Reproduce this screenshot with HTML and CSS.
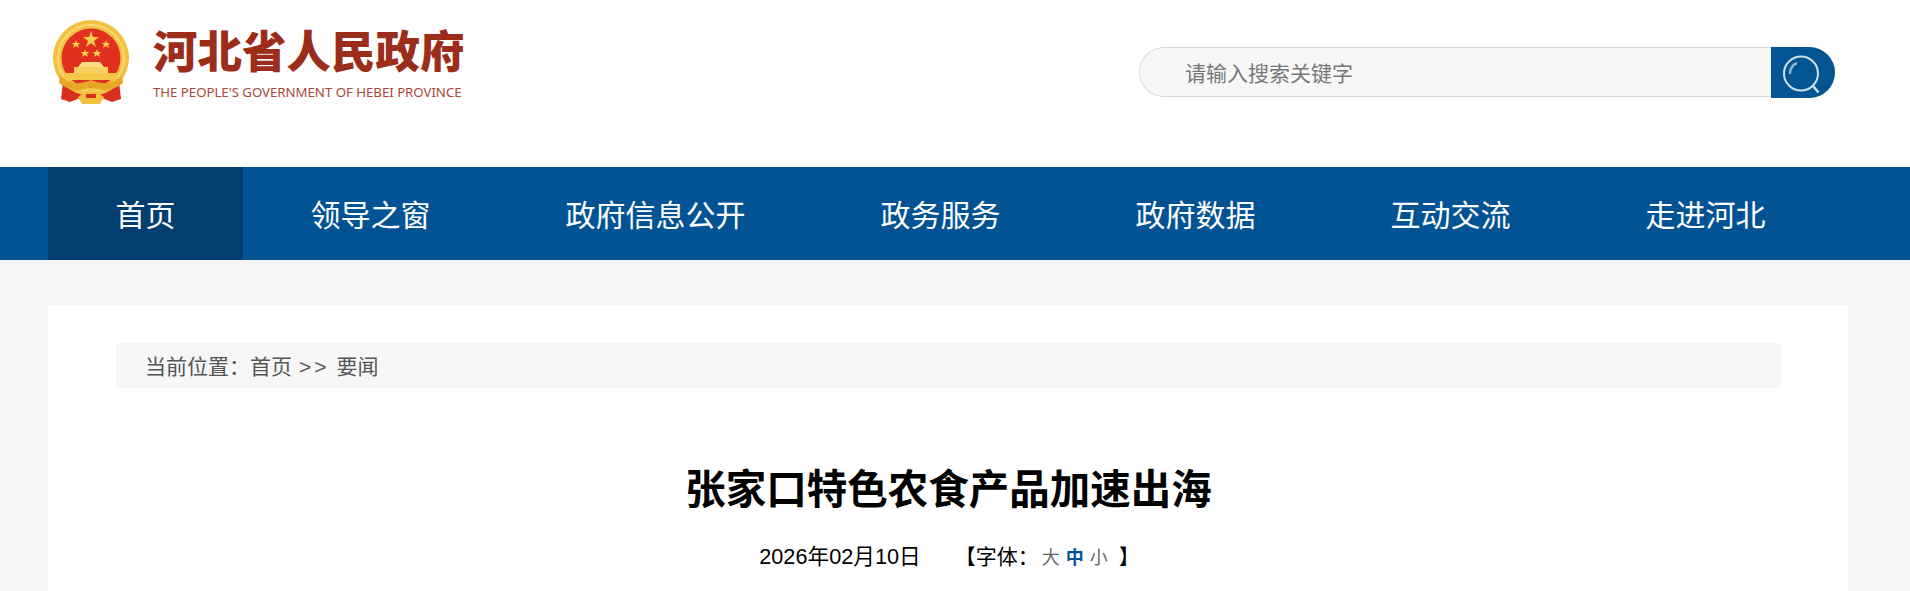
FILE: index.html
```html
<!DOCTYPE html>
<html lang="zh-CN">
<head>
    <meta charset="UTF-8">
    <title>张家口特色农食产品加速出海</title>
    <link rel="stylesheet" href="styles.css">
</head>
<body>

<div class="header">
    <a class="logo" href="#">
        <svg class="emblem" width="82" height="84" viewBox="0 0 82 84">
            <path d="M13 62 L11 79 L20 82 L30 78 L41 81 L52 78 L62 82 L71 79 L69 62 Z" fill="#d92f1f"/>
            <circle cx="41" cy="38" r="38" fill="#f3c040"/>
            <circle cx="41" cy="38" r="33" fill="none" stroke="#f9d974" stroke-width="2"/>
            <circle cx="41" cy="38" r="29.5" fill="#e0301e"/>
            <polygon points="41,11 43,17 49,17 44,21 46,27 41,23 36,27 38,21 33,17 39,17" fill="#f6d04a"/>
            <polygon points="26,20 27,23 30,23 28,25 29,28 26,26 23,28 24,25 22,23 25,23" fill="#f6d04a"/>
            <polygon points="56,20 57,23 60,23 58,25 59,28 56,26 53,28 54,25 52,23 55,23" fill="#f6d04a"/>
            <polygon points="35,29 36,32 39,32 37,34 38,37 35,35 32,37 33,34 31,32 34,32" fill="#f6d04a"/>
            <polygon points="47,29 48,32 51,32 49,34 50,37 47,35 44,37 45,34 43,32 46,32" fill="#f6d04a"/>
            <path d="M32 42 H50 L54 47 H28 Z" fill="#f9dc86"/>
            <path d="M24 47 H58 V53 H24 Z" fill="#f7d060"/>
            <path d="M16 53 H66 L70 60 H12 Z" fill="#f5c84a"/>
            <path d="M10 56 Q24 68 41 60 Q58 68 72 56 L73 63 Q58 75 41 67 Q24 75 9 63 Z" fill="#e8a826"/>
            <path d="M28 77 L41 68 L54 77 L50 84 H32 Z" fill="#f3c040"/>
            <path d="M36 74 H46 V78 H36 Z" fill="#d92f1f"/>
        </svg>
        <div class="logo-text">
            <div class="logo-cn">河北省人民政府</div>
            <div class="logo-en">THE PEOPLE'S GOVERNMENT OF HEBEI PROVINCE</div>
        </div>
    </a>
    <form class="search">
        <input class="search-input" type="text" placeholder="请输入搜索关键字">
        <button class="search-btn" type="button">
            <svg width="44" height="44" viewBox="0 0 44 44" fill="none" stroke="#cfdfeb" stroke-width="2">
                <circle cx="21" cy="22.5" r="17"/>
                <path d="M33 35 L38.5 41.5" stroke-width="2.5"/>
                <path d="M10 23 Q10 15 17 12" stroke="#8fb3cf" stroke-width="2.5"/>
            </svg>
        </button>
    </form>
</div>

<div class="nav">
    <a class="nav-item active" href="#">首页</a>
    <a class="nav-item" href="#">领导之窗</a>
    <a class="nav-item" href="#">政府信息公开</a>
    <a class="nav-item" href="#">政务服务</a>
    <a class="nav-item" href="#">政府数据</a>
    <a class="nav-item" href="#">互动交流</a>
    <a class="nav-item" href="#">走进河北</a>
</div>

<div class="main">
    <div class="panel">
        <div class="crumb">当前位置：<a href="#">首页</a><span class="crumb-sep">&gt;&gt;</span><a href="#">要闻</a></div>
        <h1 class="title">张家口特色农食产品加速出海</h1>
        <div class="info">
            <span class="date">2026年02月10日</span>
            <span class="font-size">【字体：<a href="#">大</a><a class="current" href="#">中</a><a class="last" href="#">小</a>】</span>
        </div>
    </div>
</div>

</body>
</html>
```

FILE: styles.css
```css
html, body {
    margin: 0;
    padding: 0;
}
body {
    font-family: "Liberation Sans", "Noto Sans CJK SC", sans-serif;
    background-color: #f5f5f5;
    overflow: hidden;
}
a {
    color: inherit;
    text-decoration: none;
}
.header {
    height: 167px;
    background-color: #fff;
    display: flex;
    justify-content: space-between;
    align-items: flex-start;
    padding: 0 75px 0 50px;
    box-sizing: border-box;
}
.logo {
    display: flex;
    align-items: flex-start;
    padding-top: 20px;
}
.emblem {
    display: block;
    filter: blur(0.4px);
}
.logo-text {
    margin-left: 21px;
    padding-top: 3px;
}
.logo-cn {
    font-family: "Noto Sans CJK SC", sans-serif;
    font-size: 44.5px;
    font-weight: 900;
    line-height: 52px;
    color: #9d2d1b;
}
.logo-en {
    font-family: "Noto Sans", sans-serif;
    font-size: 13.2px;
    line-height: 20px;
    margin-top: 7px;
    color: #a8473a;
    white-space: nowrap;
}
.search {
    display: flex;
    width: 696px;
    height: 51px;
    margin-top: 47px;
}
.search-input {
    flex: 1;
    min-width: 0;
    height: 50px;
    box-sizing: border-box;
    padding: 0 0 0 45px;
    border: 1px solid #d9d9d9;
    border-right: none;
    border-radius: 25px 0 0 25px;
    background-color: #f7f7f7;
    font-family: "Noto Sans CJK SC", sans-serif;
    font-size: 21px;
    outline: none;
}
.search-input::placeholder {
    color: #777;
    opacity: 1;
}
.search-btn {
    width: 64px;
    height: 51px;
    padding: 0 0 0 9px;
    border: none;
    border-radius: 0 26px 26px 0;
    background-color: #025493;
    display: flex;
    align-items: center;
    justify-content: flex-start;
    cursor: pointer;
}
.nav {
    height: 93px;
    padding-left: 48px;
    background-color: #025394;
    display: flex;
}
.nav-item {
    padding: 0 67.5px;
    font-family: "Noto Sans CJK SC", sans-serif;
    font-size: 30px;
    line-height: 93px;
    color: #fff;
}
.nav-item.active {
    background-color: #023e70;
}
.main {
    padding: 45px 62px 0 48px;
}
.panel {
    background-color: #fff;
    padding: 38px 67px 40px 68px;
}
.crumb {
    height: 45px;
    padding-left: 29px;
    background-color: #f7f7f7;
    font-family: "Noto Sans CJK SC", sans-serif;
    font-size: 21px;
    line-height: 45px;
    color: #555;
}
.crumb-sep {
    margin: 0 7px;
    letter-spacing: 3px;
    font-family: "Liberation Sans", sans-serif;
}
.title {
    margin: 70px 0 0 0;
    text-align: center;
    font-family: "Noto Sans CJK SC", sans-serif;
    font-size: 40.5px;
    font-weight: 700;
    line-height: 58px;
    color: #000;
}
.info {
    margin-top: 26px;
    padding-left: 2px;
    display: flex;
    justify-content: center;
    font-size: 21.7px;
    line-height: 30px;
    color: #000;
}
.font-size {
    margin-left: 34px;
    font-size: 21px;
}
.font-size a {
    margin: 0 3px;
    font-size: 18px;
    color: #666;
}
.font-size a.last {
    margin-right: 11px;
}
.font-size a.current {
    color: #025394;
    font-weight: 700;
}
```
